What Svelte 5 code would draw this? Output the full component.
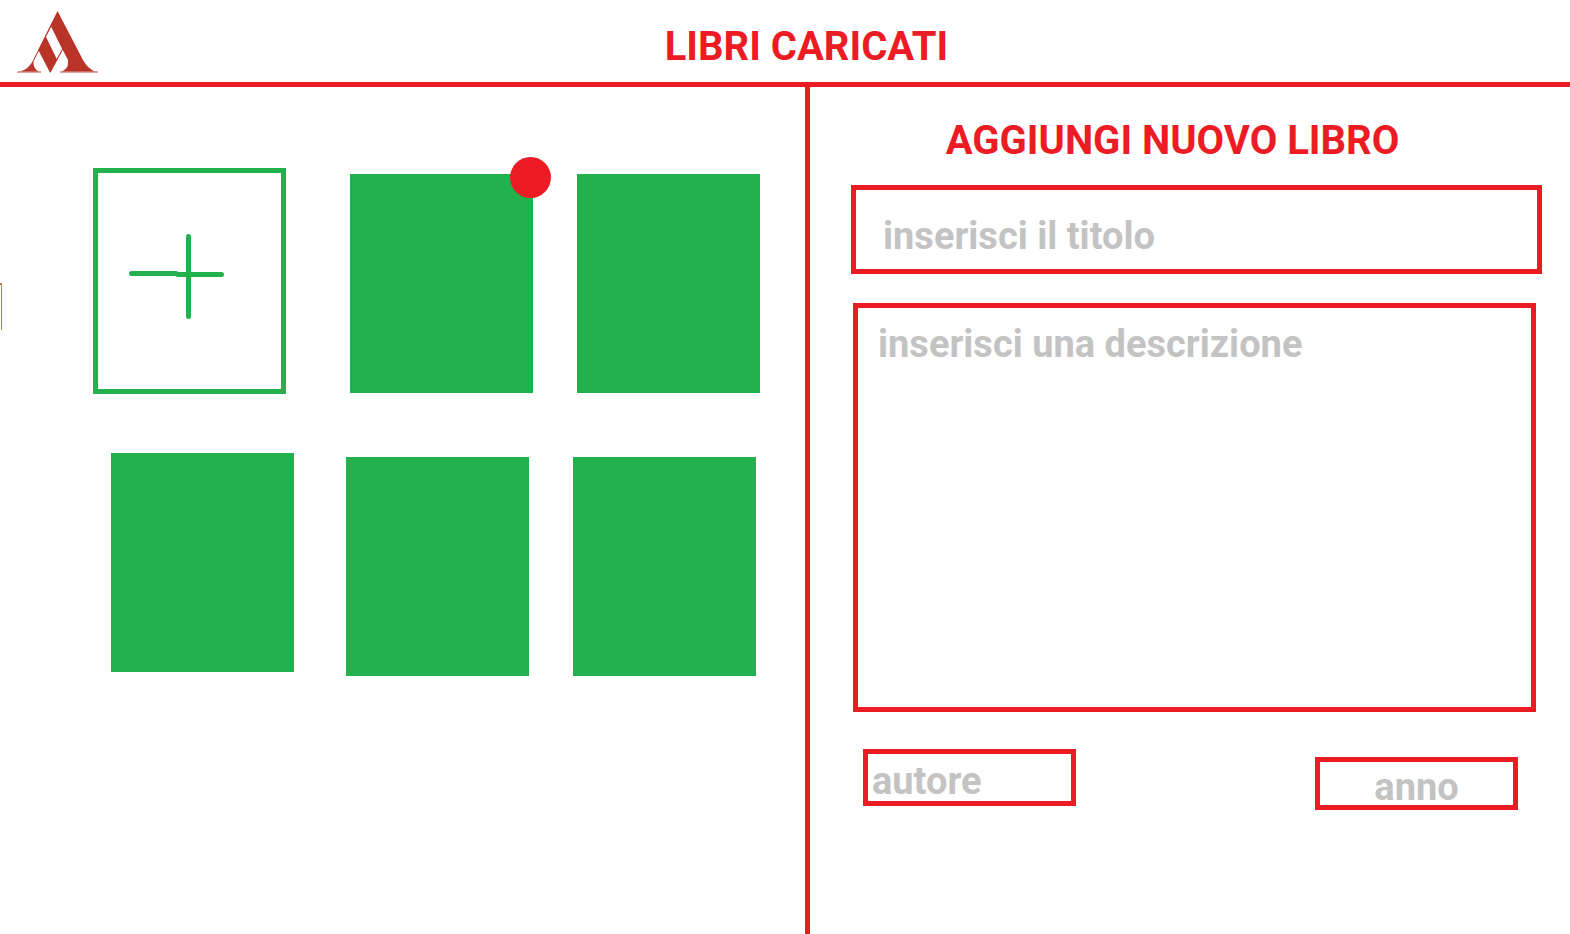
<script>
  let title = $state('');
  let description = $state('');
  let author = $state('');
  let year = $state('');
</script>

<div class="page">
  <header>
    <svg class="logo" viewBox="0 0 81 62" aria-hidden="true">
      <path class="base" d="M0 60H24V62H0ZM43 60H81V62H43Z" />
      <path
        class="mark"
        d="M40.5 0L66 49Q71 58 78 60.500H45Q51 57.500 51 52V49L45.500 38.500L33.200 62L21.300 39L16.500 49Q15.500 58 22 60.500H3Q12 58 16 49.500Z"
      />
      <path class="gap" d="M34 15.500L45.200 38L39.800 48L28.800 25.500Z" />
      <path class="cut" d="M34 15L16.500 49.500M45.500 38.500L33.200 61" />
    </svg>
    <h1>LIBRI CARICATI</h1>
  </header>

  <main>
    <section class="shelf" aria-label="Libri">
      <div class="first">
        <button class="add" aria-label="Aggiungi">
          <svg viewBox="0 0 95 86" aria-hidden="true">
            <path d="M59.500 2.500V82.500M2.500 39.500H47M49 40.500H92.500" />
          </svg>
        </button>
        <button class="book" aria-label="Libro"></button>
      </div>
      <div class="rest">
        <div class="pair upper">
          <button class="book" aria-label="Libro"><span class="badge"></span></button>
          <button class="book" aria-label="Libro"></button>
        </div>
        <div class="pair">
          <button class="book" aria-label="Libro"></button>
          <button class="book" aria-label="Libro"></button>
        </div>
      </div>
    </section>

    <section class="editor">
      <h2>AGGIUNGI NUOVO LIBRO</h2>
      <form>
        <input class="title" aria-label="Titolo" placeholder="inserisci il titolo" bind:value={title} />
        <textarea aria-label="Descrizione" placeholder="inserisci una descrizione" bind:value={description}></textarea>
        <div class="details">
          <input class="author" aria-label="Autore" placeholder="autore" bind:value={author} />
          <input class="year" aria-label="Anno" placeholder="anno" bind:value={year} />
        </div>
      </form>
    </section>
  </main>
  <span class="edge" aria-hidden="true"></span>
</div>

<style>
  :global(body) {
    margin: 0;
    background: #fff;
  }
  .page {
    --red: #ed1c24;
    --green: #22b14c;
    position: relative;
    display: flex;
    flex-direction: column;
    min-height: 100vh;
    font: 700 40px/48px Roboto, sans-serif;
    color: var(--red);
  }
  *,
  *::before {
    box-sizing: border-box;
  }
  header {
    display: flex;
    align-items: flex-start;
    padding: 11px 55px 9px 17px;
    border-bottom: 5px solid var(--red);
  }
  .logo {
    width: 81px;
    height: 62px;
    flex: none;
  }
  .mark {
    fill: #b93329;
  }
  .base {
    fill: #dfa49f;
  }
  .gap {
    fill: #fff;
  }
  .cut {
    fill: none;
    stroke: #b93329;
    stroke-width: 1;
  }
  h1,
  h2 {
    margin: 0;
    font: inherit;
    text-align: center;
  }
  h1 {
    flex: 1;
    padding-top: 12px;
  }
  main {
    flex: 1;
    display: grid;
    grid-template-columns: 161fr 153fr;
  }
  .shelf {
    display: flex;
    gap: 52px;
    padding: 81px 45px 45px 93px;
  }
  .first,
  .rest {
    display: flex;
    flex-direction: column;
  }
  .first {
    width: 201px;
    gap: 59px;
    align-items: flex-end;
  }
  .rest {
    width: 414px;
    padding-top: 6px;
    gap: 64px;
  }
  .pair {
    display: flex;
    gap: 44px;
  }
  .upper {
    justify-content: flex-end;
  }
  button {
    padding: 0;
    border: 0;
    cursor: pointer;
  }
  .add {
    align-self: flex-start;
    width: 193px;
    height: 226px;
    border: 5px solid var(--green);
    background: #fff;
  }
  .add svg {
    display: block;
    width: 95px;
    height: 86px;
    margin: 0 31px 8px;
    fill: none;
    stroke: var(--green);
    stroke-width: 5;
    stroke-linecap: round;
  }
  .book {
    position: relative;
    width: 183px;
    height: 219px;
    background: var(--green);
  }
  .badge {
    position: absolute;
    top: -17px;
    right: -18px;
    width: 41px;
    height: 41px;
    border-radius: 50%;
    background: var(--red);
  }
  .editor {
    padding: 30px 28px 30px 41px;
    border-left: 5px solid var(--red);
  }
  h2 {
    padding-right: 48px;
    margin-bottom: 20px;
  }
  form {
    display: flex;
    flex-direction: column;
  }
  input,
  textarea {
    min-width: 0;
    margin: 0;
    border: 5px solid var(--red);
    border-radius: 0;
    background: #fff;
    color: var(--red);
    font: inherit;
    font-size: 38px;
    outline: 0;
  }
  ::placeholder {
    color: #c3c3c3;
    opacity: 1;
  }
  .title {
    height: 89px;
    padding: 12px 27px 0;
  }
  textarea {
    height: 409px;
    margin: 29px 6px 37px 2px;
    padding: 12px 20px;
    resize: none;
  }
  .details {
    display: flex;
    justify-content: space-between;
    height: 61px;
    padding: 0 24px 0 12px;
  }
  .author {
    width: 213px;
    height: 57px;
    padding: 6px 4px 0;
  }
  .year {
    align-self: flex-end;
    width: 203px;
    height: 53px;
    padding: 6px 4px 0;
    text-align: center;
  }
  .edge {
    position: absolute;
    top: 283px;
    left: 0;
    width: 2px;
    height: 47px;
    border-top: 2px solid #b97a57;
    border-right: 1px solid #b97a57;
  }
</style>
